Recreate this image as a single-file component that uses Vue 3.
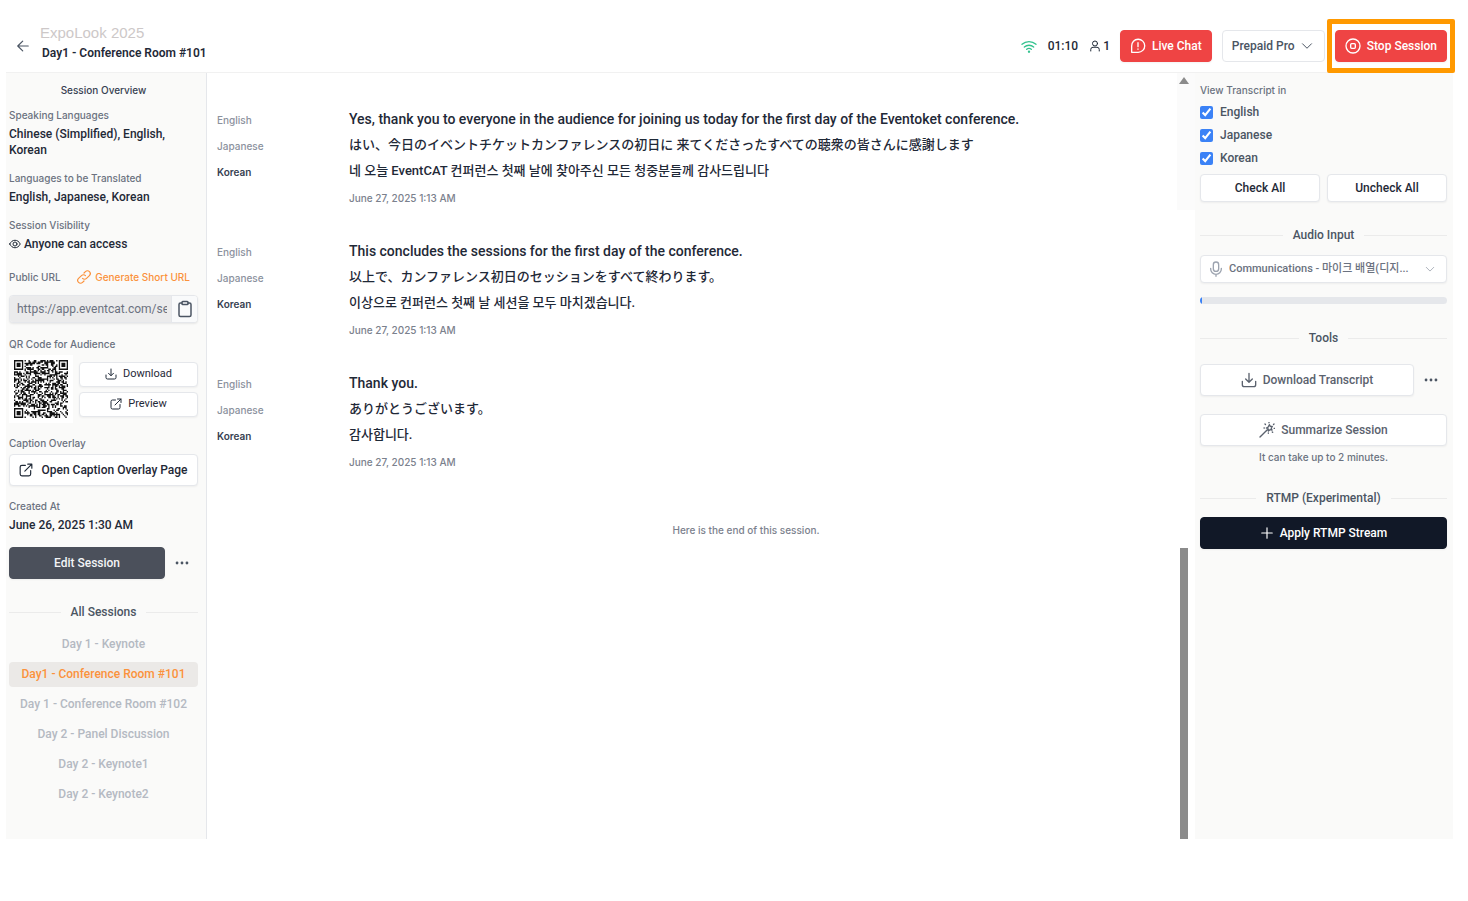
<script setup>
import { ref, reactive } from 'vue'

const sessions = [
  'Day 1 - Keynote',
  'Day1 - Conference Room #101',
  'Day 1 - Conference Room #102',
  'Day 2 - Panel Discussion',
  'Day 2 - Keynote1',
  'Day 2 - Keynote2',
]
const activeSession = 'Day1 - Conference Room #101'

const entries = [
  {
    en: 'Yes, thank you to everyone in the audience for joining us today for the first day of the Eventoket conference.',
    ja: 'はい、今日のイベントチケットカンファレンスの初日に 来てくださったすべての聴衆の皆さんに感謝します',
    ko: '네 오늘 EventCAT 컨퍼런스 첫째 날에 찾아주신 모든 청중분들께 감사드립니다',
    time: 'June 27, 2025 1:13 AM',
  },
  {
    en: 'This concludes the sessions for the first day of the conference.',
    ja: '以上で、カンファレンス初日のセッションをすべて終わります。',
    ko: '이상으로 컨퍼런스 첫째 날 세션을 모두 마치겠습니다.',
    time: 'June 27, 2025 1:13 AM',
  },
  {
    en: 'Thank you.',
    ja: 'ありがとうございます。',
    ko: '감사합니다.',
    time: 'June 27, 2025 1:13 AM',
  },
]

const languages = reactive([
  { name: 'English', checked: true },
  { name: 'Japanese', checked: true },
  { name: 'Korean', checked: true },
])
const setAll = (value) => languages.forEach((l) => (l.checked = value))

const publicUrl = ref('https://app.eventcat.com/session')

// QR modules: three finder patterns plus a deterministic data area
const QR_SIZE = 41
function buildQr() {
  let seed = 20250627
  const next = () => {
    seed = (seed * 1103515245 + 12345) % 2147483648
    return seed / 2147483648
  }
  const finder = (x, y) => {
    const d = Math.max(Math.abs(x - 3), Math.abs(y - 3))
    return d === 3 || d <= 1
  }
  let path = ''
  for (let y = 0; y < QR_SIZE; y++) {
    for (let x = 0; x < QR_SIZE; x++) {
      const far = QR_SIZE - 8
      let on = next() > 0.48
      if (x < 8 && y < 8) on = x < 7 && y < 7 && finder(x, y)
      else if (x >= far && y < 8) on = x > far && y < 7 && finder(x - far - 1, y)
      else if (x < 8 && y >= far) on = x < 7 && y > far && finder(x, y - far - 1)
      if (on) path += `M${x} ${y}h1v1h-1z`
    }
  }
  return path
}
const qrPath = buildQr()
</script>

<template>
  <div class="app">
    <header class="topbar">
      <button class="icon-btn" aria-label="Back">
        <svg class="i14" viewBox="0 0 24 24"><path d="M21 12H3M11.500 3.500L3 12l8.500 8.500" /></svg>
      </button>
      <div class="titles">
        <div class="event">ExpoLook 2025</div>
        <h1>Day1 - Conference Room #101</h1>
      </div>
      <div class="status">
        <svg class="wifi" viewBox="0 0 24 24">
          <path d="M1.500 9.500a15.500 15.500 0 0 1 21 0M5 13.500a10.500 10.500 0 0 1 14 0M8.500 17a5.500 5.500 0 0 1 7 0" />
          <circle cx="12" cy="20.500" r="0.800" />
        </svg>
        <span class="clock">01:10</span>
        <span class="viewers">
          <svg class="i12" viewBox="0 0 24 24"><circle cx="12" cy="7" r="5" /><path d="M3.500 22v-3a4.500 4.500 0 0 1 4.500-4.500h8a4.500 4.500 0 0 1 4.500 4.500v3" /></svg>
          1
        </span>
      </div>
      <button class="btn red">
        <svg class="i16" viewBox="0 0 24 24"><path d="M2.500 21.500v-9.500a9.800 9.800 0 1 1 9.800 9.500z" /><path d="M12 7v6M12 16.500v.4" /></svg>
        Live Chat
      </button>
      <div class="plan">
        <select aria-label="Plan"><option>Prepaid Pro</option></select>
        <svg class="i12" viewBox="0 0 24 24"><path d="M3 7.500l9 9 9-9" /></svg>
      </div>
      <div class="stop">
        <button class="btn red">
          <svg class="i16" viewBox="0 0 24 24"><circle cx="12" cy="12" r="10.500" /><rect x="8.500" y="8.500" width="7" height="7" rx="1.500" /></svg>
          Stop Session
        </button>
      </div>
    </header>

    <div class="body">
      <aside class="left">
        <h2 class="overview">Session Overview</h2>
        <section>
          <h3>Speaking Languages</h3>
          <p>Chinese (Simplified), English, Korean</p>
        </section>
        <section>
          <h3>Languages to be Translated</h3>
          <p>English, Japanese, Korean</p>
        </section>
        <section>
          <h3>Session Visibility</h3>
          <p class="visibility">
            <svg class="i12" viewBox="0 0 24 24"><path d="M1.500 12C4 7 7.700 4.500 12 4.500S20 7 22.500 12C20 17 16.300 19.500 12 19.500S4 17 1.500 12z" /><circle cx="12" cy="12" r="4" /></svg>
            Anyone can access
          </p>
        </section>
        <div class="url-head">
          <label for="url">Public URL</label>
          <a href="#">
            <svg class="i14" viewBox="0 0 24 24"><path d="M9.500 14.500a4.800 4.800 0 0 0 6.800 0l5-5a4.800 4.800 0 0 0-6.800-6.800L12 5.200" /><path d="M14.500 9.500a4.800 4.800 0 0 0-6.800 0l-5 5a4.800 4.800 0 0 0 6.800 6.800l2.500-2.500" /></svg>
            Generate Short URL
          </a>
        </div>
        <div class="url">
          <input id="url" v-model="publicUrl" readonly />
          <button aria-label="Copy URL">
            <svg class="i18" viewBox="0 0 24 24"><path d="M8 4H6a2 2 0 0 0-2 2v14a2 2 0 0 0 2 2h12a2 2 0 0 0 2-2V6a2 2 0 0 0-2-2h-2" /><rect x="8" y="2" width="8" height="4" rx="1" /></svg>
          </button>
        </div>
        <section>
          <h3>QR Code for Audience</h3>
          <div class="qr-row">
            <div class="qr">
              <svg :viewBox="`0 0 ${QR_SIZE} ${QR_SIZE}`" preserveAspectRatio="none" role="img" aria-label="QR code"><path :d="qrPath" /></svg>
            </div>
            <div class="qr-actions">
              <button class="btn small">
                <svg class="i12" viewBox="0 0 24 24"><path d="M12 2v13M7 10.500l5 5 5-5M2 14v5a3 3 0 0 0 3 3h14a3 3 0 0 0 3-3v-5" /></svg>
                Download
              </button>
              <button class="btn small">
                <svg class="i12" viewBox="0 0 24 24"><path d="M11 4H5a3 3 0 0 0-3 3v12a3 3 0 0 0 3 3h12a3 3 0 0 0 3-3v-6M15 2h7v7M22 2L10 14" /></svg>
                Preview
              </button>
            </div>
          </div>
        </section>
        <section>
          <h3>Caption Overlay</h3>
          <button class="btn wide overlay">
            <svg class="i14" viewBox="0 0 24 24"><path d="M11 4H5a3 3 0 0 0-3 3v12a3 3 0 0 0 3 3h12a3 3 0 0 0 3-3v-6M15 2h7v7M22 2L10 14" /></svg>
            Open Caption Overlay Page
          </button>
        </section>
        <section>
          <h3>Created At</h3>
          <p>June 26, 2025 1:30 AM</p>
        </section>
        <div class="edit-row">
          <button class="btn slate">Edit Session</button>
          <button class="icon-btn more" aria-label="More session actions">
            <svg class="i14 dots" viewBox="0 0 24 24"><circle cx="3.500" cy="12" r="2.400" /><circle cx="12" cy="12" r="2.400" /><circle cx="20.500" cy="12" r="2.400" /></svg>
          </button>
        </div>
        <h2 class="divider">All Sessions</h2>
        <nav>
          <a v-for="s in sessions" :key="s" href="#" :class="{ active: s === activeSession }">{{ s }}</a>
        </nav>
      </aside>

      <main>
        <article v-for="(e, i) in entries" :key="i">
          <span class="lang">English</span><p>{{ e.en }}</p>
          <span class="lang">Japanese</span><p lang="ja">{{ e.ja }}</p>
          <span class="lang source">Korean</span><p lang="ko">{{ e.ko }}</p>
          <time>{{ e.time }}</time>
        </article>
        <div class="end">Here is the end of this session.</div>
      </main>

      <div class="scroll" aria-hidden="true">
        <div class="scroll-top"><i></i></div>
        <div class="thumb"></div>
      </div>

      <aside class="right">
        <h3>View Transcript in</h3>
        <div class="checks">
          <label v-for="l in languages" :key="l.name"><input v-model="l.checked" type="checkbox" />{{ l.name }}</label>
        </div>
        <div class="pair">
          <button class="btn mid" @click="setAll(true)">Check All</button>
          <button class="btn mid" @click="setAll(false)">Uncheck All</button>
        </div>

        <h2 class="divider audio">Audio Input</h2>
        <div class="device">
          <svg class="mic" viewBox="0 0 24 24"><rect x="8" y="1.500" width="8" height="14" rx="4" /><path d="M4 11v1a8 8 0 0 0 16 0v-1M12 20v3" /></svg>
          <select aria-label="Audio input device"><option>Communications - 마이크 배열(디지...</option></select>
          <svg class="chev" viewBox="0 0 24 24"><path d="M3 8l9 9 9-9" /></svg>
        </div>
        <div class="meter"><i></i></div>

        <h2 class="divider tools">Tools</h2>
        <div class="tool-row">
          <button class="btn muted">
            <svg class="i16" viewBox="0 0 24 24"><path d="M12 2v13M7 10.500l5 5 5-5M2 14v5a3 3 0 0 0 3 3h14a3 3 0 0 0 3-3v-5" /></svg>
            Download Transcript
          </button>
          <button class="icon-btn more" aria-label="More tools">
            <svg class="i14 dots" viewBox="0 0 24 24"><circle cx="3.500" cy="12" r="2.400" /><circle cx="12" cy="12" r="2.400" /><circle cx="20.500" cy="12" r="2.400" /></svg>
          </button>
        </div>
        <button class="btn wide muted summarize">
          <svg class="i16" viewBox="0 0 24 24"><path d="M1.500 22.500L12.500 11.500" /><path d="M15.500 4l1.500 2.500 3 .2-1.700 2.500 1.200 2.900-3-.6-2.400 2-.3-3.100-2.800-1.400 2.800-1.400z" /><path d="M15 .5v.8M9 3l.7.700M8 9h-.5M22.500 3l-.7.700M23.500 9.500h-.8M20.500 15.500l-.6-.6M14 17v-.8" /></svg>
          Summarize Session
        </button>
        <p class="note">It can take up to 2 minutes.</p>

        <h2 class="divider rtmp">RTMP (Experimental)</h2>
        <button class="btn wide dark">
          <svg class="i14" viewBox="0 0 24 24"><path d="M12 3v18M3 12h18" /></svg>
          Apply RTMP Stream
        </button>
      </aside>
    </div>
  </div>
</template>

<style>
body {
  margin: 0;
  background: #fff;
}
</style>

<style scoped>
* {
  box-sizing: border-box;
}
.app {
  display: flex;
  flex-direction: column;
  min-height: calc(100vh - 62px);
  margin: 0 15px 62px 6px;
  font-family: Roboto, 'Noto Sans CJK KR', sans-serif;
  font-size: 12px;
  font-weight: 500;
  line-height: 16px;
  color: #1f2937;
}
h1, h2, h3, p {
  margin: 0;
  font-size: inherit;
  font-weight: inherit;
}
button, input, select {
  font: inherit;
  color: inherit;
}
button {
  cursor: pointer;
}
a {
  text-decoration: none;
}
svg {
  flex: none;
  fill: none;
  stroke: currentColor;
  stroke-width: 2;
  stroke-linecap: round;
  stroke-linejoin: round;
}
.i12 { width: 12px; height: 12px; }
.i14 { width: 14px; height: 14px; }
.i16 { width: 16px; height: 16px; }
.i18 { width: 18px; height: 18px; }
.dots {
  fill: currentColor;
  stroke: none;
}
.icon-btn {
  display: flex;
  padding: 0;
  border: 0;
  background: none;
  color: #4b5563;
}

/* Top bar */
.topbar {
  display: flex;
  align-items: center;
  height: 73px;
  padding: 20px 6px 0 10px;
  border-bottom: 1px solid #f1f1f1;
}
.titles {
  flex: 1;
  margin-left: 10px;
  padding-bottom: 6px;
}
.event {
  font: 15px/20px 'Liberation Sans', Arial, sans-serif;
  color: #cdc8c8;
}
.titles h1 {
  padding-left: 2px;
  line-height: 20px;
  font-weight: 600;
}
.status {
  display: flex;
  align-items: center;
  margin-right: 10px;
}
.wifi {
  width: 16px;
  height: 16px;
  color: #34c38f;
}
.clock {
  margin: 0 11px;
}
.viewers {
  display: flex;
  align-items: center;
  gap: 2px;
}
.btn {
  display: flex;
  align-items: center;
  justify-content: center;
  gap: 6px;
  height: 32px;
  padding: 0 9px;
  border: 1px solid #e5e7eb;
  border-radius: 4px;
  background: #fff;
  box-shadow: 0 1px 2px rgba(0, 0, 0, 0.05);
  white-space: nowrap;
}
.red {
  border-color: #ef4444;
  background: #ef4444;
  color: #fff;
}
.plan {
  position: relative;
  margin: 0 10px;
  color: #4b5563;
}
.plan select {
  appearance: none;
  width: 103px;
  height: 32px;
  padding: 0 9px;
  border: 1px solid #e5e7eb;
  border-radius: 4px;
  background: #fff;
}
.plan svg {
  position: absolute;
  right: 12px;
  top: 10px;
  pointer-events: none;
}
.stop {
  position: relative;
}
.stop::after {
  content: '';
  position: absolute;
  inset: -11px -8px;
  border: 5px solid #ff9900;
  border-radius: 2px;
  pointer-events: none;
}

/* Columns */
.body {
  display: flex;
  flex: 1;
}
.left {
  flex: none;
  width: 201px;
  padding: 10px 8px 0 3px;
  border-right: 1px solid #e5e7eb;
  background: #fafaf9;
}
h3, .url-head, .note, .overview, .lang, time, .end {
  font-family: Inter, sans-serif;
  font-size: 10px;
  line-height: 14px;
  color: #6b7280;
}
.overview {
  margin-bottom: 11px;
  text-align: center;
  color: #374151;
}
.left section {
  margin-bottom: 13px;
}
.left section h3 {
  margin-bottom: 4px;
}
.visibility {
  display: flex;
  align-items: center;
  gap: 3px;
}
.url-head {
  display: flex;
  justify-content: space-between;
  margin-top: 18px;
  padding-right: 8px;
}
.url-head a {
  display: flex;
  align-items: center;
  gap: 4px;
  color: #fb923c;
}
.url {
  display: flex;
  height: 28px;
  margin: 11px 0 14px;
  border: 1px solid #e5e7eb;
  border-radius: 4px;
  background: #fff;
  box-shadow: 0 1px 2px rgba(0, 0, 0, 0.08);
  overflow: hidden;
}
.url input {
  flex: 1;
  min-width: 0;
  padding: 0 4px 0 7px;
  border: 0;
  background: #ebebec;
  font-weight: 400;
  color: #6b7280;
}
.url button {
  display: flex;
  align-items: center;
  justify-content: center;
  width: 26px;
  padding: 0;
  border: 0;
  border-left: 1px solid #e5e7eb;
  background: #f9fafb;
  color: #4b5563;
}
.qr-row {
  display: flex;
  align-items: center;
  gap: 6px;
}
.qr {
  padding: 5px;
  background: #fff;
}
.qr svg {
  display: block;
  width: 54px;
  height: 58px;
  fill: #111;
  stroke: none;
}
.qr-actions {
  display: flex;
  flex: 1;
  flex-direction: column;
  gap: 5px;
}
.small {
  height: 25px;
  font-size: 11px;
  font-weight: 400;
}
.wide {
  width: 100%;
}
.overlay {
  gap: 8px;
}
.edit-row, .tool-row {
  display: flex;
  align-items: center;
}
.edit-row {
  margin-top: 14px;
}
.edit-row .btn, .tool-row .btn {
  flex: 1;
}
.more {
  justify-content: center;
  width: 33px;
}
.slate {
  border-color: #4b505b;
  background: #4b505b;
  color: #f3f4f6;
}
.divider {
  display: flex;
  align-items: center;
  gap: 10px;
  color: #4b5563;
}
.divider::before, .divider::after {
  content: '';
  flex: 1;
  height: 1px;
  background: #ebebeb;
}
.left .divider {
  margin: 25px 0 12px;
}
nav {
  display: flex;
  flex-direction: column;
  gap: 5px;
  margin-bottom: 32px;
}
nav a {
  border-radius: 4px;
  line-height: 25px;
  text-align: center;
  color: #b4b9c2;
}
nav a.active {
  background: #ebe9e7;
  color: #fb923c;
}

/* Transcript */
main {
  flex: 1;
  min-width: 0;
  padding: 33px 34px 0 10px;
}
article {
  display: grid;
  grid-template-columns: 132px 1fr;
  margin-bottom: 32px;
}
article .lang {
  height: 26px;
  line-height: 28px;
  color: #8b919d;
}
article .source {
  font-weight: 600;
  color: #374151;
}
article p {
  font-size: 14px;
  line-height: 26px;
}
article p:lang(ja) {
  font-family: Roboto, 'Noto Sans CJK JP', sans-serif;
  font-size: 13px;
}
article p:lang(ko) {
  font-size: 13px;
}
article time {
  grid-column: 2;
  margin-top: 6px;
  line-height: 16px;
  color: #7b818d;
}
.end {
  margin: 52px 0 0 132px;
  line-height: 16px;
  text-align: center;
  color: #7b818d;
}

/* Scroll bar */
.scroll {
  display: flex;
  flex-direction: column;
  justify-content: space-between;
  flex: none;
  width: 18px;
}
.scroll-top {
  height: 137px;
  background: #fbfbfb;
}
.scroll-top i {
  display: block;
  width: 0;
  margin: 4px 0 0 2px;
  border: 5px solid transparent;
  border-top: 0;
  border-bottom: 7px solid #8b8b8b;
}
.thumb {
  width: 8px;
  height: 38%;
  margin-left: 3px;
  background: #8b8b8b;
}

/* Controls */
.right {
  flex: none;
  width: 258px;
  padding: 10px 6px 0 5px;
  background: #fafaf9;
}
.checks {
  display: flex;
  flex-direction: column;
  gap: 7px;
  margin: 7px 0 8px;
  color: #4b5563;
}
.checks label {
  display: flex;
  align-items: center;
  gap: 7px;
}
.checks input {
  width: 13px;
  height: 13px;
  margin: 0;
  accent-color: #3b82f6;
}
.pair {
  display: flex;
  gap: 7px;
}
.mid {
  flex: 1;
  height: 28px;
}
.audio {
  margin: 25px 0 12px;
}
.device {
  position: relative;
  color: #9ca3af;
}
.device select {
  appearance: none;
  width: 100%;
  height: 28px;
  padding: 0 24px 0 28px;
  border: 1px solid #e5e7eb;
  border-radius: 4px;
  background: #fff;
  font-size: 11px;
  color: #6b7280;
  text-overflow: ellipsis;
  box-shadow: 0 1px 2px rgba(0, 0, 0, 0.05);
}
.device svg {
  position: absolute;
  pointer-events: none;
}
.mic {
  left: 8px;
  top: 6px;
  width: 16px;
  height: 16px;
}
.chev {
  right: 12px;
  top: 9px;
  width: 10px;
  height: 10px;
}
.meter {
  height: 7px;
  margin-top: 14px;
  border-radius: 4px;
  background: #e5e7eb;
  overflow: hidden;
}
.meter i {
  display: block;
  width: 2px;
  height: 100%;
  background: #3b82f6;
}
.tools {
  margin: 26px 0 18px;
}
.muted {
  color: #5b626e;
}
.summarize {
  margin: 18px 0 4px;
}
.note {
  text-align: center;
}
.rtmp {
  margin: 26px 0 11px;
}
.dark {
  border-color: #111827;
  background: #111827;
  color: #fff;
}
</style>
